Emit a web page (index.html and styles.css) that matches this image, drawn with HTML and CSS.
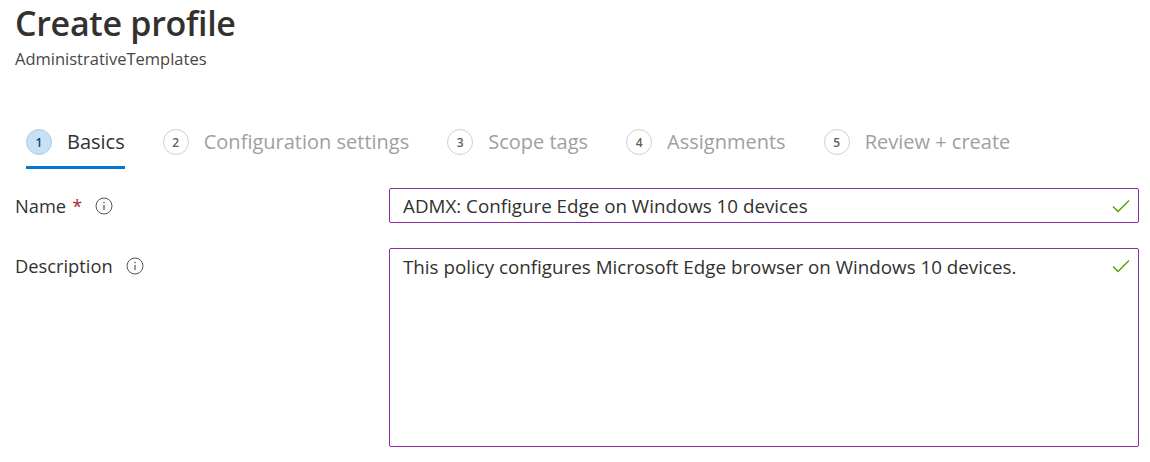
FILE: index.html
```html
<!DOCTYPE html>
<html>
<head>
<meta charset="utf-8">
<link rel="stylesheet" href="styles.css">
</head>
<body>
<div class="page">
  <header class="header">
    <h1 class="title">Create profile</h1>
    <div class="subtitle">AdministrativeTemplates</div>
  </header>
  <nav class="tabs">
    <div class="tab active"><span class="num">1</span><span class="tab-label">Basics</span></div>
    <div class="tab"><span class="num">2</span><span class="tab-label">Configuration settings</span></div>
    <div class="tab"><span class="num">3</span><span class="tab-label">Scope tags</span></div>
    <div class="tab"><span class="num">4</span><span class="tab-label">Assignments</span></div>
    <div class="tab"><span class="num">5</span><span class="tab-label">Review + create</span></div>
  </nav>
  <div class="form">
    <div class="row">
      <div class="label">Name <span class="req">*</span>
        <svg class="info" viewBox="0 0 18 18" width="18" height="18"><circle cx="9" cy="9" r="8" fill="none" stroke="#555" stroke-width="1"/><line x1="9" y1="8" x2="9" y2="13" stroke="#555" stroke-width="1.2"/><circle cx="9" cy="5.6" r="0.8" fill="#555"/></svg>
      </div>
      <div class="field input">ADMX: Configure Edge on Windows 10 devices
        <svg class="check" viewBox="0 0 20 20" width="20" height="20"><path d="M2 10.5 L7 15.5 L18 4.5" fill="none" stroke="#57a300" stroke-width="1.5"/></svg>
      </div>
    </div>
    <div class="row">
      <div class="label">Description
        <svg class="info" viewBox="0 0 18 18" width="18" height="18"><circle cx="9" cy="9" r="8" fill="none" stroke="#555" stroke-width="1"/><line x1="9" y1="8" x2="9" y2="13" stroke="#555" stroke-width="1.2"/><circle cx="9" cy="5.6" r="0.8" fill="#555"/></svg>
      </div>
      <div class="field textarea">This policy configures Microsoft Edge browser on Windows 10 devices.
        <svg class="check" viewBox="0 0 20 20" width="20" height="20"><path d="M2 10.5 L7 15.5 L18 4.5" fill="none" stroke="#57a300" stroke-width="1.5"/></svg>
      </div>
    </div>
  </div>
</div>
</body>
</html>
```
FILE: styles.css
```css
html, body {
  margin: 0;
  padding: 0;
  background: #fff;
}
body {
  font-family: "Segoe UI", "Open Sans", "Noto Sans", sans-serif;
  color: #323130;
}
.page {
  padding: 0 11px 0 15px;
}
.title {
  margin: 0;
  font-size: 34px;
  font-weight: 600;
  line-height: 46px;
  color: #323130;
  letter-spacing: -0.3px;
}
.subtitle {
  font-size: 16.5px;
  line-height: 22px;
  color: #484644;
  margin-top: 2px;
}
.tabs {
  display: flex;
  gap: 38px;
  margin-top: 59px;
  padding-left: 11px;
}
.tab {
  display: flex;
  align-items: center;
  gap: 15px;
  padding-bottom: 11px;
  border-bottom: 3px solid transparent;
  color: #a19f9d;
}
.tab.active {
  border-bottom-color: #0078d4;
  color: #323130;
}
.num {
  box-sizing: border-box;
  width: 26px;
  height: 26px;
  border: 1px solid #d2d0ce;
  border-radius: 50%;
  display: flex;
  align-items: center;
  justify-content: center;
  font-size: 12px;
  font-weight: 600;
  color: #605e5c;
}
.tab.active .num {
  background: #c7e0f4;
  border-color: #a9cdec;
  color: #004578;
}
.tab-label {
  font-size: 20px;
  line-height: 26px;
}
.form {
  margin-top: 19px;
  display: flex;
  flex-direction: column;
  gap: 25px;
}
.row {
  display: grid;
  grid-template-columns: 374px 750px;
}
.label {
  display: flex;
  align-items: center;
  height: 35px;
  font-size: 18.3px;
  color: #323130;
}
.req {
  color: #a4262c;
  margin-left: 6px;
  font-size: 18px;
}
.info {
  margin-left: 13px;
}
.field {
  position: relative;
  box-sizing: border-box;
  border: 1px solid #8a2da5;
  border-radius: 2px;
  padding: 4px 40px 0 13px;
  font-size: 18.8px;
  line-height: 26px;
  color: #323130;
}
.input {
  height: 35px;
}
.textarea {
  height: 199px;
  padding-top: 5px;
}
.check {
  position: absolute;
  right: 7px;
  top: 7px;
}
```
